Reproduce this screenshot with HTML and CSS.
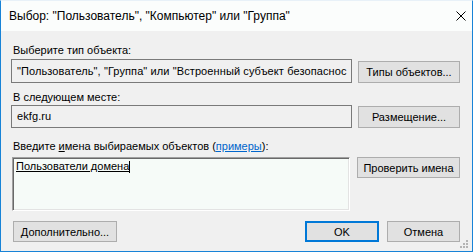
FILE: index.html
```html
<!DOCTYPE html>
<html lang="ru">

<head>
    <meta charset="UTF-8">
    <meta name="viewport" content="width=device-width, initial-scale=1.0">
    <title>Выбор</title>
    <link rel="stylesheet" href="styles.css">
</head>

<body>
    <div id="okno">
        <div class="tytul">
            <span>Выбор: "Пользователь", "Компьютер" или "Группа"</span>
            <svg class="zamknij" width="10" height="10" viewBox="0 0 10 10">
                <path d="M0.5 0.5 L9.5 9.5 M9.5 0.5 L0.5 9.5" stroke="#000" stroke-width="1" fill="none" />
            </svg>
        </div>
        <div class="tresc">
            <div class="etykieta e1">Выберите тип объекта:</div>
            <div class="wiersz">
                <div class="pole">"Пользователь", "Группа" или "Встроенный субъект безопаснос</div>
                <button class="przycisk">Типы объектов...</button>
            </div>
            <div class="etykieta e2">В следующем месте:</div>
            <div class="wiersz">
                <div class="pole p2">ekfg.ru</div>
                <button class="przycisk">Размещение...</button>
            </div>
            <div class="etykieta e3">Введите <u>и</u>мена выбираемых объектов (<a href="#">примеры</a>):</div>
            <div class="wiersz w3">
                <div class="obszar"><span class="wpis">Пользователи домена</span><span class="kursor"></span></div>
                <button class="przycisk">Проверить имена</button>
            </div>
            <div class="dol">
                <button class="przycisk dodatkowo">Дополнительно...</button>
                <button class="przycisk ok">OK</button>
                <button class="przycisk anuluj">Отмена</button>
            </div>
        </div>
        <svg class="uchwyt" width="10" height="10" viewBox="0 0 10 10">
            <rect x="6" y="0" width="2" height="2" fill="#b4b4b4" />
            <rect x="3" y="3" width="2" height="2" fill="#b4b4b4" />
            <rect x="6" y="3" width="2" height="2" fill="#b4b4b4" />
            <rect x="0" y="6" width="2" height="2" fill="#b4b4b4" />
            <rect x="3" y="6" width="2" height="2" fill="#b4b4b4" />
            <rect x="6" y="6" width="2" height="2" fill="#b4b4b4" />
        </svg>
    </div>
</body>

</html>
```
FILE: styles.css
```css
* {
    box-sizing: border-box;
    margin: 0;
    padding: 0;
    font-family: "Liberation Sans", Arial, sans-serif;
}

body {
    width: 473px;
    height: 252px;
    overflow: hidden;
}

#okno {
    position: relative;
    width: 473px;
    height: 252px;
    border: 1px solid #1883d7;
    border-top-color: #e8f1f8;
    background-color: #f0f0f0;
}

.tytul {
    height: 30px;
    background-color: #fbfdfc;
    display: flex;
    align-items: center;
    justify-content: space-between;
    padding: 0 6px 0 8px;
    font-size: 12px;
    color: #000;
}

.zamknij {
    display: block;
}

.tresc {
    padding: 0 12px 0 10px;
    font-size: 11px;
    color: #000;
}

.etykieta {
    height: 14px;
    line-height: 14px;
    padding-left: 2px;
}

.e1 {
    margin-top: 12px;
    margin-bottom: 2px;
}

.e2 {
    margin-top: 7px;
    margin-bottom: 1px;
}

.e3 {
    margin-top: 11px;
    margin-bottom: 4px;
}

.e3 u {
    text-decoration: underline;
}

.e3 a {
    color: #0066cc;
    text-decoration: underline;
}

.wiersz {
    display: flex;
    align-items: flex-end;
    gap: 6px;
}

.pole {
    width: 341px;
    height: 24px;
    border: 1px solid #7a7a7a;
    background-color: #f0f0f0;
    line-height: 22px;
    padding-left: 5px;
    letter-spacing: 0.1px;
    white-space: nowrap;
}

.p2 {
    height: 23px;
    line-height: 21px;
}

.przycisk {
    width: 102px;
    height: 22px;
    border: 1px solid #adadad;
    background-color: #e1e1e1;
    font-size: 11px;
    color: #000;
    text-align: center;
}

.w3 {
    align-items: flex-start;
}

.w3 .przycisk {
    width: 103px;
    height: 21px;
    margin-left: 1px;
}

.obszar {
    width: 338px;
    height: 54px;
    margin-left: 1px;
    background-color: #f6fbf8;
    border-top: 1px solid #a0a0a0;
    border-left: 1px solid #a0a0a0;
    border-right: 1px solid #ffffff;
    border-bottom: 1px solid #ffffff;
    box-shadow: inset 1px 1px 0 #696969, inset -1px -1px 0 #e3e3e3;
    padding: 2px 0 0 3px;
    line-height: 13px;
    display: flex;
    align-items: flex-start;
}

.wpis {
    text-decoration: underline;
}

.kursor {
    display: block;
    width: 1px;
    height: 12px;
    margin-top: 1px;
    background-color: #000;
}

.dol {
    display: flex;
    margin-top: 10px;
    gap: 8px;
}

.dol .przycisk {
    height: 21px;
}

.dodatkowo {
    width: 104px;
    margin-left: 2px;
}

.ok {
    width: 74px;
    margin-left: auto;
    border: 2px solid #0078d7;
}

.anuluj {
    width: 73px;
}

.uchwyt {
    position: absolute;
    right: 2px;
    bottom: 1px;
}
```
